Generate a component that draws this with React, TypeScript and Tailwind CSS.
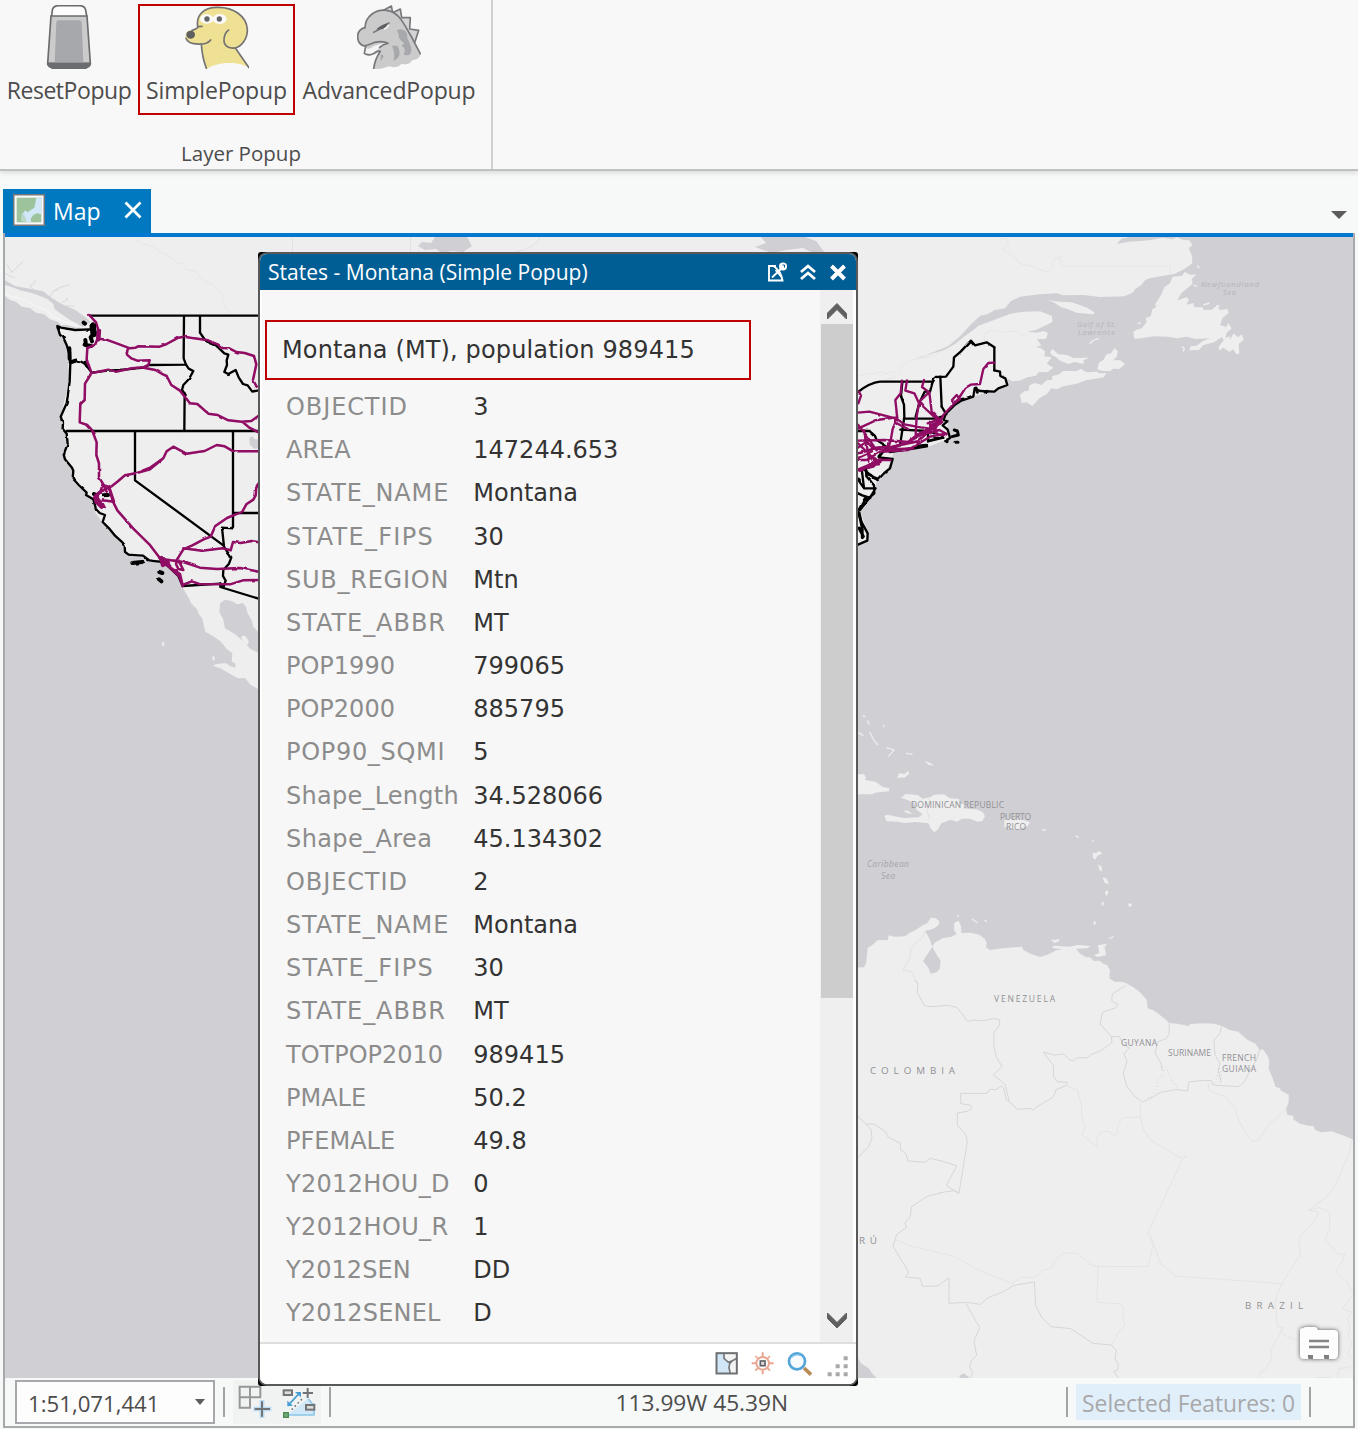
import React from "react";

const fields: [string, string, string?][] = [
  ["OBJECTID", "3", "tracking-[0.9px]"],
  ["AREA", "147244.653"],
  ["STATE_NAME", "Montana", "tracking-[0.85px]"],
  ["STATE_FIPS", "30", "tracking-[1.3px]"],
  ["SUB_REGION", "Mtn", "tracking-[0.75px]"],
  ["STATE_ABBR", "MT", "tracking-[0.95px]"],
  ["POP1990", "799065"],
  ["POP2000", "885795"],
  ["POP90_SQMI", "5", "tracking-[0.7px]"],
  ["Shape_Length", "34.528066", "tracking-[0.25px]"],
  ["Shape_Area", "45.134302", "tracking-[0.4px]"],
  ["OBJECTID", "2", "tracking-[0.9px]"],
  ["STATE_NAME", "Montana", "tracking-[0.85px]"],
  ["STATE_FIPS", "30", "tracking-[1.3px]"],
  ["STATE_ABBR", "MT", "tracking-[0.95px]"],
  ["TOTPOP2010", "989415"],
  ["PMALE", "50.2"],
  ["PFEMALE", "49.8"],
  ["Y2012HOU_D", "0", "tracking-[0.3px]"],
  ["Y2012HOU_R", "1", "tracking-[0.35px]"],
  ["Y2012SEN", "DD", "tracking-[0.1px]"],
  ["Y2012SENEL", "D", "tracking-[0.2px]"],
];

function CanisterIcon() {
  return (
    <svg viewBox="111 15 192 192" className="h-16 w-16 shrink-0">
      <path d="M155 48 L157 30 Q160 17 176 17 H238 Q254 17 257 30 L260 48" fill="#fcfcfc" stroke="#6b6c6f" strokeWidth="5" />
      <path d="M153 48 H261 L271 190 H143 Z" fill="#cbcbcb" stroke="#6b6c6f" strokeWidth="5" />
      <path d="M169 66 Q170 61 176 61 H238 Q244 61 245 66 L250 188 H164 Z" fill="#a7a8ac" />
      <path d="M141 188 H273 V195 Q270 203 258 207 H156 Q144 203 141 195 Z" fill="#6b6c6f" />
    </svg>
  );
}

function DogIcon() {
  return (
    <svg viewBox="15 15 192 192" className="h-16 w-16 shrink-0">
      <path d="M53 80 C48 48 68 22 112 22 C160 21 200 48 202 90 C202 117 185 138 166 144 L207 204 C180 184 115 184 80 207 C70 184 66 160 64 132 C42 134 18 128 17 113 C15 98 24 89 36 90 C46 88 56 86 53 80 Z" fill="#efe194" />
      <g fill="none" stroke="#737373" strokeWidth="5" strokeLinecap="round" strokeLinejoin="round">
        <path d="M66 79 L53 80 C48 48 68 22 112 22 C160 21 200 48 202 88 C203 116 185 139 166 144 L207 203" />
        <path d="M53 83 Q46 89 36 91" />
        <path d="M18 115 C23 132 50 133 65 132 Q82 132 92 120" />
        <path d="M64 132 Q66 170 79 205" />
        <path d="M146 90 C138 94 131 108 132 123 C133 139 147 146 166 144" />
      </g>
      <ellipse cx="80" cy="57" rx="20" ry="14" fill="#fafafa" />
      <ellipse cx="119" cy="57" rx="21" ry="15" fill="#fafafa" />
      <circle cx="81" cy="57" r="8" fill="#656565" />
      <circle cx="118" cy="57" r="8" fill="#656565" />
      <ellipse cx="32" cy="104" rx="13" ry="12" fill="#5f5f5f" />
    </svg>
  );
}

function MonsterIcon() {
  return (
    <svg viewBox="21 15 192 192" className="h-16 w-16 shrink-0">
      <path d="M98 32 L124 18 L128 38 L151 27 L155 53 L181 53 L179 87 L206 91 L195 125 L180 126 L115 42 Z" fill="#d4d4d5" stroke="#77787b" strokeWidth="5" strokeLinejoin="round" />
      <path d="M45 83 C45 48 76 27 110 30 C145 36 160 65 180 95 L212 163 Q205 182 187 180 Q178 197 155 191 Q140 207 119 199 L92 206 L70 207 C70 185 82 172 88 155 C80 158 76 168 59 163 C43 163 40 151 43 141 C28 138 21 126 23 108 C24 93 34 85 45 83 Z" fill="#cbcbcc" />
      <path d="M43 137 Q49 151 63 144 L73 137 L102 129 L114 133 Q91 134 82 151 L63 162 L44 160 Z" fill="#f4f4f4" />
      <g fill="none" stroke="#77787b" strokeWidth="5" strokeLinecap="round" strokeLinejoin="round">
        <path d="M45 83 C46 49 76 27 110 31 C150 36 163 77 183 108 L211 161" />
        <path d="M45 83 Q25 88 23 107 Q22 132 43 138 Q65 132 75 127 Q99 122 114 130 Q99 132 89 142 M47 140 L43 160 M46 162 Q60 168 72 160 Q83 151 91 154 Q74 179 71 207" />
        <path d="M71 97 Q88 91 101 78 L117 69" />
      </g>
      <path d="M78 89 Q91 75 112 70 Q113 82 98 87 Z" fill="#5f6063" />
      <path d="M102 88 Q113 82 116 75" fill="none" stroke="#f7f7f7" strokeWidth="5" />
      <path d="M141 91 C158 82 175 95 172 115 Q190 148 181 162 Q171 169 160 163 Q171 145 154 137 L163 130 Q144 116 146 104 Z M126 137 L143 137 Q154 160 144 173 L130 184 Q137 161 126 137 M92 165 Q98 160 101 170 L92 184 Z" fill="#a7a8ac" />
    </svg>
  );
}

function RibbonButton({ label, tracking, children }: { label: string; tracking: string; children: React.ReactNode }) {
  return (
    <div className="flex flex-col items-center whitespace-nowrap">
      {children}
      <span className={"mt-[5px] text-[23px] leading-[32px] " + tracking}>{label}</span>
    </div>
  );
}

function Basemap() {
  return (
    <svg viewBox="5 237 1348 1141" className="block h-[1141px] w-[1348px]">
      <defs>
        <filter id="rough" filterUnits="userSpaceOnUse" x="0" y="0" width="1500" height="1500">
          <feTurbulence type="fractalNoise" baseFrequency="0.12" numOctaves="1" seed="4" />
          <feDisplacementMap in="SourceGraphic" scale="2.5" xChannelSelector="R" yChannelSelector="G" />
        </filter>
      </defs>
      <rect x="5" y="237" width="1348" height="1141" fill="#d0cfd4" />

      {/* western continent */}
      <g transform="translate(0 230) scale(.33333)">
        <path fill="#eee" d="M0 0H2600V480H780V2070L745 2055 735 2040 700 2033 655 2012 641 2000 655 1998 690 2006 701 2008 698 1994 706 1984 705 1964 697 1952 680 1945 665 1930 640 1918 616 1906 612 1880 602 1855 592 1845 580 1818 568 1800 560 1785 548 1075 480 995 440 985 376 973 374 944 340 905 308 880 285 846 280 806 260 796 220 757 218 715 190 680 203 640 195 605 182 560 200 520 208 450 210 395 200 345 180 315 172 288 205 294 250 298 232 294 200 285 183 286 175 276 150 268 133 253 108 248 90 234 65 230 48 215 30 210 15 198Z" />
        <path fill="#eee" d="M172 288L270 300 550 610 780 610V1800H548L480 995 440 985 376 973 374 944 340 905 308 880 285 846 280 806 260 796 220 757 218 715 190 680 203 640 182 560 208 450 200 345Z" />
        <path fill="#d0cfd4" d="M15 151L45 168 90 176 130 184 152 202 183 221 226 240 258 263 272 275 262 282 248 290 236 293 235 282 210 270 184 252 164 238 160 222 142 207 120 198 95 189 60 181 35 171 15 165Z" />
        <path fill="none" stroke="#d8d8db" strokeWidth="3" d="M15 130L30 138 44 143M20 103L36 127M35 128L58 105 70 95M102 181L90 168 103 159 107 149M150 201L156 187 181 172 209 164M157 187L166 179 175 181M182 219L205 208 196 204M209 238L201 227 224 229" />
        <path fill="none" stroke="#f5f5f5" strokeWidth="4" d="M16 194L75 210 108 229 136 238 158 260 196 276 244 291" />
        <path fill="none" stroke="#e2e2e2" strokeWidth="2" d="M408 28L423 41 460 50 481 66 500 74 530 98 549 101 560 119 587 123 602 146 637 163 650 180 665 190 667 212 680 240 696 248" />
        <path fill="#d0cfd4" d="M660 1120L675 1109 697 1114 712 1123 728 1119 738 1130 742 1148 755 1171 760 1190 778 1210V1270L750 1256 734 1237 704 1212 675 1195 669 1166 658 1147Z" />
        <path fill="#eee" d="M723 1220L734 1216 746 1232 744 1244 731 1238Z" />
        <path fill="#d0cfd4" d="M748 624L757 618 763 627 778 629V655L762 656 749 643Z" />
      </g>
      {/* Pacific around the Baja peninsula */}
      <g transform="translate(0 460) scale(.33333)">
        <path fill="#d0cfd4" d="M548 384L557 398 567 415 573 430 590 446 597 463 607 476 616 515 639 528 663 545 680 567 697 580 695 604 707 612 706 623 690 618 678 609 650 612 638 617 661 625 691 642 714 655 735 654 751 674 780 690V2760H0V384Z" />
        <path fill="#eee" d="M485 545L493 548 493 558 488 558Z M638 586L645 592 643 602 637 600Z" />
        <path fill="#d0cfd4" d="M0 0H190L218 25 220 65 260 106 280 116 285 156 308 190 340 215 374 254 376 283 440 295 480 305 530 340 548 384H0Z" />
      </g>

      {/* eastern seaboard and Atlantic Canada */}
      <g transform="translate(850 230) scale(.33333)">
        <path fill="#eee" d="M0 0H1510V21H978L1000 30 1018 31 1027 46 1016 54 1026 78 1027 100 1003 117 973 132 940 137 899 145 885 151 874 165 856 177 848 188 823 199 750 201 700 195 640 196 621 190 568 193 510 200 482 214 465 235 434 240 413 253 391 257 363 283 327 322 295 348 260 362 226 377 195 384 216 382 252 369 282 361 314 343 350 314 365 304 386 287 426 272 458 260 482 251 520 245 570 244 605 257 608 275 585 287 557 300 532 305 561 308 580 303 594 309 588 327 561 327 574 347 557 350 573 355 585 364 583 379 605 382 590 401 610 413 593 426 565 427 558 437 532 442 512 451 487 454 470 445 473 465 445 480 405 488 335 510 300 540 285 565 294 575 290 600 300 625 235 650 130 665 125 690 110 720 80 750 75 790 50 810 30 840 50 900 50 935 25 945 0 945Z" />
        <path fill="#d0cfd4" d="M800 42L815 26 838 21H980L968 28 938 23 903 30 870 33 835 35Z" />
        <path fill="#eee" d="M510 494L523 484 536 482 538 466 554 459 575 465 590 451 606 450 607 438 628 433 638 423 681 423 693 416 708 427 742 425 747 430 769 429 761 442 708 451 680 461 640 469 621 478 603 475 592 491 568 505 547 528 530 517 515 519Z M742 418L747 398 760 390 770 373 783 370 794 353 804 365 800 380 790 391 811 391 825 402 808 417 791 416 778 424 755 422Z M600 367L608 357 624 373 651 375 670 384 717 383 701 391 701 402 674 396 655 402 628 391 621 383 605 375Z M594 210L628 215 665 217 708 232 735 248 728 253 680 248 650 236 632 231 611 217Z" />
        <path fill="#eee" d="M850 306L859 299 875 295 890 276 887 264 902 259 907 238 918 232 916 223 935 191 943 172 960 160 968 140 996 137 1004 126 1021 134 1039 133 1026 147 1027 162 1010 176 994 190 982 211 1010 202 1017 211 1008 224 1030 219 1032 231 1057 232 1061 240 1085 239 1102 226 1109 240 1133 237 1136 249 1118 263 1110 285 1129 291 1135 279 1145 295 1130 309 1126 323 1140 319 1139 330 1151 310 1164 322 1176 313 1181 330 1166 342 1168 371 1158 372 1150 358 1138 365 1119 353 1108 362 1106 350 1121 331 1116 321 1092 337 1059 346 1047 360 1018 361 1022 349 1040 347 1060 332 1080 325 1037 327 1010 320 982 325 953 320 910 319 875 325 853 326Z M859 280L874 275 869 283Z" />
        <path fill="none" stroke="#eee" strokeWidth="4" d="M719 342Q728 329 747 325M996 349L1003 356 999 364M1042 107L1048 114M1030 165L1041 170M1060 225L1078 219M1100 226L1110 229" />
        <g fill="none" stroke="#e2e2e2" strokeWidth="2">
          <path d="M450 25L474 31 474 46 455 58 485 74 502 92 511 102 543 108 574 121 597 126 609 112 606 102 615 87 641 77M628 80L635 105 640 108H961V135M0 440L30 437 69 430 97 425 105 432 131 423 134 441 102 450M150 431L153 408 185 390 250 378 290 350M403 335L403 310 426 302 450 307 493 303 527 320" />
        </g>
      </g>

      {/* inlets visible above the popup */}
      <path fill="#cfcfd4" d="M418 246l4-4 9 1 4-6h32l5 9-9 6-12-1-8 3-7-5-11 1zM755 247l11-4-5-6h44l11 4 9 12h-12l-10-5-17 2-14 3z" />
      <path fill="none" stroke="#e2e2e4" d="M292.500 237v16M410.500 237v16M515 252q20-3 25-15" />

      {/* Caribbean and the northern coast of South America */}
      <g transform="translate(850 700) scale(.33333)">
        <path fill="#eee" d="M0 803L42 802 48 791 53 743 64 737 84 720 113 721 116 706 133 710 166 709 178 699 193 692 216 677 231 670 243 653 258 655 268 664 266 675 255 683 240 690 225 692 239 718 247 740 254 728 280 714 302 711 320 702 312 689 313 668 326 662 333 678 334 699 362 698 388 704 404 716 410 728 408 742 420 750 459 745 516 740 521 751 543 762 570 771 593 764 619 751 638 748 607 744 610 737 660 740 682 735 722 738 711 745 678 746 690 761 708 772 720 772 732 783 749 782 761 792 771 795 780 811 778 835 794 845 821 846 850 863 870 878 890 900 850 960V1250H0Z" />
        <path fill="#d0cfd4" d="M247 740L260 764 272 782 269 807 260 817 242 821 235 803 219 783 233 762Z" />
        <path fill="#eee" d="M0 223L43 223 48 233 44 240 77 245 97 260 118 265 117 274 75 278 69 283 0 283Z M141 234L148 220 164 222 175 212 177 221 166 232Z M153 293L167 282 203 285 218 296 243 291 251 284 282 283 299 295 327 297 330 312 350 312 340 325 384 329 399 337 405 349 397 363 384 365 359 356 335 356 322 365 302 359 286 365 274 370 263 389 253 397 243 386 235 370 196 366 163 369 143 365 110 364 103 348 112 344 160 354 206 352 218 342 200 330 194 310 170 299Z M463 362L475 356 520 360 540 367 533 378 500 389 475 382 463 382Z M160 331L174 332 188 343 170 339Z" />
        <path fill="#eee" d="M222 182L240 188 252 197 235 194Z M728 459L738 459 748 452 756 461 742 467 736 479 729 474Z M745 493L755 500 756 514 748 510Z M757 532L769 535 777 552 765 550Z M765 575L774 571 775 580 768 589Z M755 607L762 606 760 617 755 616Z M835 610L845 611 843 621 835 618Z M734 662L739 668 734 675 729 672Z M744 736L771 731 764 741 768 766 743 771 731 765 748 760Z M602 718L613 720 622 718 628 717 627 724 613 729Z" />
        <path fill="none" stroke="#ececef" strokeWidth="4" d="M38 46L46 51M51 62L59 73M24 97L40 107M59 96L72 122 84 135M109 142L132 150 115 170M168 160L188 163M99 75L103 82M366 657L383 669M402 660L411 665M321 645L328 650M778 716L791 710M576 390H588M677 407L686 413M726 421L732 425" />
        <path fill="none" stroke="#dadadd" strokeWidth="2" d="M232 292L239 302 232 335 238 352 232 361M226 696L214 716 200 725 183 747 180 773 159 810 184 814 191 828 206 856 202 900" />
      </g>

      {/* South America */}
      <g transform="translate(850 980) scale(.33333)">
        <path fill="#eee" d="M0 10H828L850 22 870 37 890 60 893 85 910 91 925 101 945 117 958 129 982 131 1015 138 1022 132 1057 130 1092 131 1117 138 1137 149 1165 155 1190 178 1217 192 1229 211 1238 207 1253 228 1258 243 1256 267 1269 297 1277 321 1290 324 1293 332 1316 344 1316 367 1308 388 1312 404 1330 408 1330 418 1350 431 1376 437 1390 438 1396 450 1414 457 1445 454 1484 468 1505 477 1530 490V1220H0Z" />
        <path fill="#d0cfd4" d="M24 1135L33 1150 56 1165 70 1185 88 1200H20ZM328 1187L342 1180 360 1195H330Z" />
        <path fill="none" stroke="#d6d6d7" strokeWidth="3" strokeLinejoin="round" d="M192 0L204 12 202 38 224 78 249 80 292 76 321 82 353 124 372 120 400 122 433 115 450 120 447 138 432 157 432 202 440 233 456 259 430 286 454 303 466 315 478 366 504 388 543 385 547 392 561 380 606 354 615 340 617 330 650 315 652 307 621 305 610 288 611 258 580 216 612 225 641 222 659 240 670 243 682 233 712 233 722 224 754 211 786 188 784 169 750 131 758 97 798 83 804 74 785 62 787 42 828 16M786 170L808 169 817 190 838 204 822 222 831 243 820 279 830 318 856 351 878 366 907 352 932 337 976 329 1013 333 1016 306 1060 301 1085 302 1088 315 1165 320 1182 308 1197 278 1220 240 1229 210M958 130L957 163 948 176 924 185 915 220 933 250 936 272M1115 138L1111 158 1092 182 1095 225 1110 250 1105 270 1113 305 M478 366L469 361 461 323 454 318 437 329 418 328 411 340H332V371L362 376 365 386 352 394 322 399V436L347 463 352 485 327 640 289 617 320 558 303 552 278 544 240 535 225 547 174 543 167 520 152 510 151 490 113 470 108 456 72 432 47 432 24 409M48 432L63 448 66 473 56 500 24 532M327 640L315 632 281 636 230 650 185 680 180 711 165 728 169 743 140 763 129 799 145 825 176 876 166 891 210 895 218 919 264 918 297 893V970L350 967 391 973 417 952 461 935 491 916 553 906 555 940 557 977 575 1012 603 1040 662 1046 729 1090 784 1095 799 1111 795 1136 805 1154 803 1170 791 1174 805 1194M346 967L389 1043 372 1084 380 1126 365 1141 359 1160 368 1178 360 1194" />
        <path fill="none" stroke="#e4e4e5" strokeWidth="3" strokeLinejoin="round" d="M652 317L682 331 694 377 695 410 706 443 695 464 743 501 740 472 755 455 779 454 788 468 801 461 804 435 818 413 871 411V368M871 411L880 447 903 481 953 511 990 533 1009 528 997 540 893 759 903 770 932 852 977 888 1296 911M900 770L909 796 895 859 744 860 723 855 683 820 640 819 614 841 607 863 579 872 554 892 515 892 485 910 388 871 310 828 185 799 138 779M744 860L741 967 812 972 822 983 817 1004 825 1036 808 1053 784 1096M1074 307L1078 332 1130 352 1145 375 1158 389 1161 410 1185 456 1207 484 1226 480 1255 435 1283 410 1306 391M1505 478L1499 516 1457 615 1430 650 1376 690 1402 695 1403 708 1384 734 1351 768 1347 793 1351 824 1325 863 1302 901 1281 942 1276 973 1283 1042 1300 1044 1284 1072 1263 1110 1264 1138 1247 1168 1231 1177 1226 1194M1375 690L1407 683 1438 695 1440 745 1426 779 1465 823 1484 822 1480 840 1457 873 1490 905 1507 938M1291 1048L1300 1064 1345 1083M1505 949L1478 986 1505 997 1493 1015 1499 1045 1494 1068 1505 1090 1493 1120 1504 1135M1463 1194L1468 1165 1499 1163 1505 1154M1396 1193L1445 1192" />
        <path fill="none" stroke="#d0d0d3" strokeWidth="3" strokeDasharray="3 8" d="M938 260L942 280 923 300 919 325 904 350 890 354M947 260L965 300 986 328M1108 265L1100 293 1091 316M1114 273L1110 314" />
      </g>

      {/* straight political boundaries, west */}
      <g transform="translate(0 230) scale(.33333)" fill="none" stroke="#000" strokeWidth="7" strokeLinejoin="round" strokeLinecap="round">
        <path d="M270 257H776M552 258L551 385 558 404 446 405 431 413 M553 602L554 490M600 258L600 308M200 603H776M405 604V751L670 946M699 605V890M699 849H776M548 1068L661 1061V1071L776 1106" />
      </g>
      {/* coastline, river boundaries and highways, west */}
      <g filter="url(#rough)">
        <g transform="translate(0 230) scale(.33333)" fill="none" strokeLinejoin="round" strokeLinecap="round">
          <g stroke="#000" strokeWidth="7">
            <path d="M431 413L360 420 323 422 275 428 256 402 241 394 223 392 210 396M558 404L566 416 580 423 567 447 550 465 546 480 557 495M600 308L617 333 648 346 673 370 685 374 680 391 681 405 673 426 685 432 707 420 716 442 729 462 743 466 757 485 776 481M699 890L696 895 666 893 672 950 680 963 694 982 687 1001 670 1020 669 1038 677 1052 671 1070 661 1060" />
            <path d="M270 298L225 300 183 293 172 288 180 315 189 321 200 345 209 375 211 399 209 455 200 520 182 560 189 578 188 596 200 611 203 642 191 673 195 688 216 713 220 722 218 745 236 765 260 788 258 795 280 808 288 837 299 849 315 855 308 876 327 895 345 917 364 934 374 945 375 966 386 974 429 977 448 991 480 995 500 1005 535 1038 548 1068" />
            <path strokeWidth="12" d="M251 278L255 281M279 283L284 308 272 322 276 334M254 344L262 347M208 355L209 387M256 330L258 345 273 348M212 397L227 392M256 398L262 408M397 999L426 996M478 1026L487 1029M477 1048L484 1054M282 792L290 796M312 796L324 795M290 810L302 823" />
            <path strokeWidth="19" d="M278 289L281 312" />
          </g>
          <g stroke="#8f0863" strokeWidth="7.5">
            <path d="M268 255L288 277 295 300 292 328 285 345 262 354 260 388 274 427 271 435 255 461 254 510 241 523 239 577 262 585 276 600 290 637 289 675 297 700 297 742 312 766 326 770 339 815 352 841 400 896 448 943 480 985 515 1018 537 1038 548 1068M297 326L319 329 350 340 390 355 407 353 414 349 479 350 500 342 535 323 552 320 624 331 653 343 667 354 688 355 709 366 734 369 762 378 769 403 759 450 770 470M383 358L380 373 394 385 412 392 449 391 445 405 430 412 396 415 347 425 325 419 280 428M431 413L466 420 489 433 500 438 514 465 540 482 570 520 592 522 625 551 653 555 685 571 725 575 754 573 776 557M728 576L748 593 776 607M428 722L452 712 490 685 500 664 520 650 559 671 614 663 650 645 674 649 700 664H776" />
            <path d="M484 690L448 719 410 729 375 736 352 755 333 770 311 780 291 800 300 815 314 832 286 816 285 797 302 783 308 762M313 770L320 785M328 772L342 815 308 811M479 985L502 990 529 992 550 958 577 946 611 928 632 920 646 888 681 864 727 845 739 823 760 809 767 796 769 770 776 760M550 955L606 962 668 955 692 961 699 936 722 939 755 933 776 937M502 989L552 997 600 1013 651 1017 720 1014 776 1025M531 990L528 1002 535 1017 550 1020 540 1000 531 990M499 1004L540 1032 548 1065 575 1054 598 1062 690 1063 729 1051 776 1050" />
            <path strokeWidth="13" d="M286 803L307 825M484 984L489 1005M491 988L504 1005M290 815L305 830M501 995L508 1007M297 303L295 328" />
          </g>
        </g>
      </g>

      {/* political boundaries and highways, east */}
      <g transform="translate(850 230) scale(.33333)" fill="none" stroke="#000" strokeWidth="7" strokeLinejoin="round" strokeLinecap="round">
        <path d="M24 486Q60 458 90 455H249M433 352V421M271 440L275 530M162 566H258L275 560M151 599L235 603 254 610M36 724L42 775H76" />
      </g>
      <g filter="url(#rough)">
        <g transform="translate(850 230) scale(.33333)" fill="none" strokeLinejoin="round" strokeLinecap="round">
          <g stroke="#000" strokeWidth="7">
            <path d="M249 455L257 441 288 440 310 410 312 382 332 365 363 332 375 346 410 337 433 352M433 421L450 425 451 438 466 445 472 465 445 475 433 485 390 483 374 475 370 500 332 513 315 524 287 552 281 570 292 574 278 586 293 599 300 624 286 633M248 455L240 485 224 485 208 519 197 560M275 530L289 553M157 457L153 500 162 524 163 561 150 647M234 602L234 635M24 603L58 603 75 618 80 630 112 650M112 650L86 682 128 687 120 715 103 729 83 750 56 734 44 719 24 719M76 775L65 795 30 840M48 720L49 739 72 766 73 790 58 803 37 796 24 790M24 845L34 875 53 910 52 932 24 944" />
            <path strokeWidth="9" d="M120 665L190 655 230 648M205 648L230 646M328 511L340 507M378 474L382 487M405 486L411 484M60 803L47 809M45 806L28 838M27 848L36 890 37 923M240 632L277 623M313 600L322 603 325 615 306 620 M291 630V635M318 637H324M52 729L70 742 83 747M26 750L40 770M27 894L40 919" />
          </g>
          <g stroke="#8f0863" strokeWidth="7">
            <path d="M433 398L415 399 400 417 390 462 362 464 347 473 325 507 280 555 267 580 254 592M156 452L152 490 136 510 142 564 128 597 122 632 112 660M171 451L166 482 193 490 207 520 200 560 197 615M222 450L216 471 238 487 245 545 265 565M208 515L221 531 261 568M237 487L208 515M24 548L58 545 139 566 163 583 212 592 257 598M24 596L80 570 139 562M24 632L104 630 174 636 236 604 270 567M24 670L83 652 126 650 166 642 205 612 277 576M24 690L50 690 90 665 174 660 240 620 287 611M24 720L70 710 90 690 122 690M80 661L41 605 24 584M27 485L33 497 25 520M42 601L48 633 58 692M24 653L50 635 70 655M24 640L75 690M24 684L50 672 66 664M104 665L150 645 205 634M137 565L140 580 174 597M306 510L320 495 330 508 318 516 309 515" />
            <path d="M233 580L276 565 250 604 278 620 290 612 268 600 230 610 204 634 160 640 112 658 190 655M240 575L242 610M66 656L110 659M42 715L89 688" />
            <path strokeWidth="13" d="M109 661L144 659M58 709L89 694M249 585L270 578M30 719L55 709M74 688L83 700" />
          </g>
        </g>
      </g>

      <g fontFamily="Open Sans, sans-serif" fill="#919195">
        <g fontSize="7.5" fontStyle="italic" fill="#b4b4b9">
          <text x="1201" y="287" textLength="58">Newfoundland</text>
          <text x="1223" y="295" textLength="13">Sea</text>
          <text x="1077" y="327" textLength="39">Gulf of St.</text>
          <text x="1078" y="335" textLength="37">Lawrence</text>
        </g>
        <g fontSize="8.5" fontStyle="italic" fill="#a5a5aa">
          <text x="867" y="866.500" textLength="42">Caribbean</text>
          <text x="881" y="879" textLength="14">Sea</text>
        </g>
        <g fontSize="8.5">
          <text x="911" y="808" textLength="93">DOMINICAN REPUBLIC</text>
          <text x="1000" y="820" textLength="31">PUERTO</text>
          <text x="1006" y="830" textLength="20">RICO</text>
          <text x="994" y="1001.500" textLength="61">VENEZUELA</text>
          <text x="1121" y="1045.500" textLength="36">GUYANA</text>
          <text x="1168" y="1056" textLength="43">SURINAME</text>
          <text x="1222" y="1061" textLength="34">FRENCH</text>
          <text x="1222" y="1072" textLength="34">GUIANA</text>
        </g>
        <g fontSize="9.800">
          <text x="870" y="1074" textLength="85">COLOMBIA</text>
          <text x="859" y="1244" textLength="18">RÚ</text>
          <text x="1245" y="1308.500" textLength="58">BRAZIL</text>
        </g>
      </g>
    </svg>
  );
}

function MapTabIcon() {
  return (
    <svg viewBox="39 582 96 96" className="-mt-[2px] h-8 w-8">
      <rect x="41" y="584" width="92" height="92" fill="#fafafa" stroke="#76777a" strokeWidth="5" />
      <rect x="50" y="593" width="74" height="74" fill="#9cc39c" />
      <path d="M109 593H124V643L111 640 100 645 92 657 94 667H78L75 650 67 642 76 631 82 637 103 623Z" fill="#d1e7f7" />
      <path d="M65 640L75 648 77 667 63 663Z" fill="#bcd9ca" />
    </svg>
  );
}

function PopupHeader() {
  return (
    <div className="flex h-[36px] shrink-0 items-center bg-[#005e95] pb-px pl-2 pr-[3px] text-white">
      <span className="text-[21px] leading-7 tracking-[0.02px]">States - Montana (Simple Popup)</span>
      <svg viewBox="0 0 86 20" className="ml-auto h-5 w-[86px]" fill="none" stroke="#fff">
        <path d="M9 4H2V18.500H15.500Q14 9 6.500 4" strokeWidth="1.900" />
        <path d="M5 15.500L15 6M8.500 8L14.500 15" strokeWidth="1.800" />
        <circle cx="16" cy="4.500" r="4" fill="#fff" stroke="none" />
        <path d="M15.500 3H17.500V5.500" stroke="#005e95" strokeWidth="1" />
        <path d="M34 10L41 4 48 10M34 17L41 11 48 17" strokeWidth="2.800" />
        <path d="M64.500 4L77.500 17M77.500 4L64.500 17" strokeWidth="4" />
      </svg>
    </div>
  );
}

function ScrollBar() {
  return (
    <div className="flex w-[33px] shrink-0 flex-col items-center bg-[#efefef]">
      <svg viewBox="0 0 33 34" className="h-[34px] w-[33px]">
        <path d="M7.500 24V29L17 19.500 26.500 29V23.500L17 13.500 7.500 23Z" fill="#606060" stroke="#606060" />
      </svg>
      <div className="h-[674px] w-[32px] bg-[#cdcdcd]" />
      <svg viewBox="0 0 33 34" className="mt-auto h-[34px] w-[33px]">
        <path d="M7.500 5L17 14.500 26.500 5V10.500L17 20 7.500 10.500Z" fill="#606060" stroke="#606060" />
      </svg>
    </div>
  );
}

function PopupFooter() {
  return (
    <div className="flex h-[42px] shrink-0 items-start justify-end border-t-2 border-[#dedede] bg-white pr-[7px] pt-[7px]">
      <svg viewBox="346 62 402 84" className="h-7 w-[134px]">
        <rect x="350" y="69" width="62" height="61" fill="#f4f4f4" />
        <path d="M350 69H373L374 90 387 100 388 130H350Z" fill="#d1e7f7" />
        <path d="M373 69L373 84 386 96 398 91 412 84M398 91L390 100 388 112 392 130" fill="none" stroke="#77787b" strokeWidth="5" />
        <rect x="350.500" y="68.500" width="61" height="61" fill="none" stroke="#6f7073" strokeWidth="6" />
        <g stroke="#e9a691" fill="none">
          <circle cx="489" cy="99" r="19" strokeWidth="6" />
          <path d="M489 66V80M489 117V132M456 99H470M508 99H522" strokeWidth="6" />
          <path d="M467 77L476 86M511 77L502 86M467 121L476 112M511 121L502 112" strokeWidth="5" />
        </g>
        <rect x="482" y="92" width="14" height="14" fill="#ddd" stroke="#616265" strokeWidth="5" />
        <path d="M613 113L634 133" stroke="#b98a54" strokeWidth="11" />
        <circle cx="592" cy="93" r="24" fill="#f7fbfe" stroke="#54a5d9" strokeWidth="8" />
        <path d="M575 82Q585 70 602 75" fill="none" stroke="#8bc8ec" strokeWidth="4" />
        <path fill="#a9a9ab" d="M732 78h12v12h-12zM708 102h12v12h-12zM732 102h12v12h-12zM684 126h12v12h-12zM708 126h12v12h-12zM732 126h12v12h-12z" />
      </svg>
    </div>
  );
}

function Popup() {
  return (
    <div className="absolute left-[253px] top-[15px] h-[1134px] w-[600px] rounded-[3px] bg-black">
      <div className="flex h-full flex-col overflow-hidden rounded-[9px] border-2 border-[#595959] bg-white">
        <PopupHeader />
        <div className="flex min-h-0 flex-1 pl-[2px] pr-[3px]">
          <div className="flex-1 bg-[#f7f7f7] font-['DejaVu_Sans',Verdana,sans-serif] text-[24px] text-[#333]">
            <div className="ml-[3px] mt-[30px] flex h-[60px] w-[486px] items-center whitespace-nowrap border-2 border-[#c00000] pl-[15px] tracking-[0.14px]">
              Montana (MT), population 989415
            </div>
            <div className="ml-[24px] mt-[5.600px]">
              {fields.map(([name, value, tracking], i) => (
                <div key={i} className="flex h-[43.170px] items-center whitespace-nowrap">
                  <span className={"w-[187.300px] text-[#8c8c8c] " + (tracking ?? "")}>{name}</span>
                  <span>{value}</span>
                </div>
              ))}
            </div>
          </div>
          <ScrollBar />
        </div>
        <PopupFooter />
      </div>
    </div>
  );
}

function StatusBar() {
  return (
    <div className="flex h-12 items-center bg-[#f7f9f8] text-[22.700px] text-[#4c4c4c]">
      <div className="ml-[10px] flex h-11 w-[200px] items-center justify-between border-2 border-[#a7a8ac] bg-[#fdfdfd] pl-[11px] pr-2">
        <span className="pt-[3px] text-[22.200px]">1:51,071,441</span>
        <svg viewBox="0 0 10 6" className="h-[6px] w-[10px]"><path d="M0 0H10L5 6Z" fill="#5c5c5c" /></svg>
      </div>
      <div className="ml-2 h-[30px] w-[2px] bg-[#a3a3a5]" />
      <div className="ml-2 h-11 w-[88px] bg-[#f1f2f2]">
        <svg viewBox="699 150 264 132" className="h-11 w-[88px]" fill="none">
          <path d="M719 170H781V202H719ZM719 202V233H750V170" stroke="#97979a" strokeWidth="6" />
          <path d="M786 210V264M760 237H814" stroke="#b9dcf2" strokeWidth="14" />
          <path d="M786 214V260M764 237H810" stroke="#737477" strokeWidth="6" />
          <path d="M867 252L925 205 942 228V256H867Z" fill="#cfe7f7" />
          <path d="M862 255H944M942 220V256M925 207L942 227" stroke="#8cc7e9" strokeWidth="5" />
          <path d="M870 220L896 192" stroke="#449dd3" strokeWidth="5" />
          <path d="M885 186H903V202ZM862 212V229L879 227Z" fill="#449dd3" />
          <path d="M923 174V204M908 189H939" stroke="#737477" strokeWidth="6" />
          <rect x="851" y="181" width="25" height="14" fill="#ddd" stroke="#737477" strokeWidth="6" />
          <rect x="918" y="225" width="25" height="14" fill="#ddd" stroke="#737477" strokeWidth="6" />
          <path d="M875 239L910 203" stroke="#77787a" strokeWidth="5" strokeDasharray="5 8" />
          <rect x="851" y="248" width="14" height="14" fill="#72a978" stroke="#4d8d54" strokeWidth="4" />
        </svg>
      </div>
      <div className="ml-2 h-[30px] w-[2px] bg-[#a3a3a5]" />
      <span className="ml-[284.500px] w-[174px] whitespace-nowrap pt-[3px]">113.99W 45.39N</span>
      <div className="ml-auto h-[30px] w-[2px] bg-[#a3a3a5]" />
      <div className="ml-2 mr-2 flex h-9 w-[225px] items-center justify-center whitespace-nowrap bg-[#e1effa] pt-[4px] text-[22.800px] text-[#a8a8aa]">
        Selected Features: 0
      </div>
      <div className="mr-[42px] h-[30px] w-[2px] bg-[#a3a3a5]" />
    </div>
  );
}

export default function App() {
  return (
    <div className="h-[1429px] w-[1358px] overflow-hidden bg-[#f7f9f8] font-['Open_Sans','Noto_Sans',sans-serif] text-[#4c4c4c]">
      <header className="flex h-[171px] border-b-2 border-[#c0c0c0] bg-[#f8f8f8] shadow-[0_2px_5px_rgba(0,0,0,0.12)]">
        <div className="flex w-[493px] flex-col border-r-2 border-[#cfcfcf]">
          <div className="flex h-[115px]">
            <div className="w-[138px] pt-[5px]">
              <RibbonButton label="ResetPopup" tracking="tracking-[-0.45px]"><CanisterIcon /></RibbonButton>
            </div>
            <div className="mt-1 h-[111px] w-[157px] border-2 border-[#c00000]">
              <div className="-mt-px flex justify-center">
                <RibbonButton label="SimplePopup" tracking="tracking-[-0.15px]"><DogIcon /></RibbonButton>
              </div>
            </div>
            <div className="w-[188px] pt-[5px]">
              <RibbonButton label="AdvancedPopup" tracking="tracking-[-0.15px]"><MonsterIcon /></RibbonButton>
            </div>
          </div>
          <div className="mt-[23px] w-[482px] text-center text-[20.500px] leading-[30px]">Layer Popup</div>
        </div>
      </header>

      <div className="mt-[18px] flex h-11 items-center justify-between pl-[3px] pr-[11px]">
        <div className="flex h-11 w-[148px] items-center bg-[#0079c1] pl-[10px] text-white">
          <MapTabIcon />
          <span className="ml-2 text-[23px]">Map</span>
          <svg viewBox="0 0 18 18" className="-mt-[2px] ml-[23px] h-[18px] w-[18px]">
            <path d="M1.500 1.500L16.500 16.500M16.500 1.500L1.500 16.500" stroke="#fff" strokeWidth="2.800" />
          </svg>
        </div>
        <svg viewBox="0 0 16 8" className="mt-[7px] h-2 w-4"><path d="M0 0H16L8 8Z" fill="#5c5c5c" /></svg>
      </div>

      <main className="ml-[3px] h-[1195px] w-[1352px] border-x-2 border-b-2 border-[#a7a8ac]">
        <div className="h-1 bg-[#0078cf]" />
        <div className="relative">
          <Basemap />
          <svg viewBox="0 0 46 42" className="absolute bottom-[12px] right-[11px] h-[42px] w-[46px] drop-shadow-[0_0_2px_#555]">
            <path d="M7 5Q7 3 10 3H19Q21 3 22 6H38Q42 6 42 10V30Q42 35 38 35H33V31H28V35H17V31H12V35H8Q4 35 4 31V6Q4 4 7 4Z" fill="#fdfdfd" />
            <path d="M13 17H33M13 23H33" stroke="#858585" strokeWidth="2.500" />
            <path d="M13 31H17V35H13ZM29 31H33V35H29Z" fill="#7f7f7f" />
          </svg>
          <Popup />
        </div>
        <StatusBar />
      </main>
    </div>
  );
}
